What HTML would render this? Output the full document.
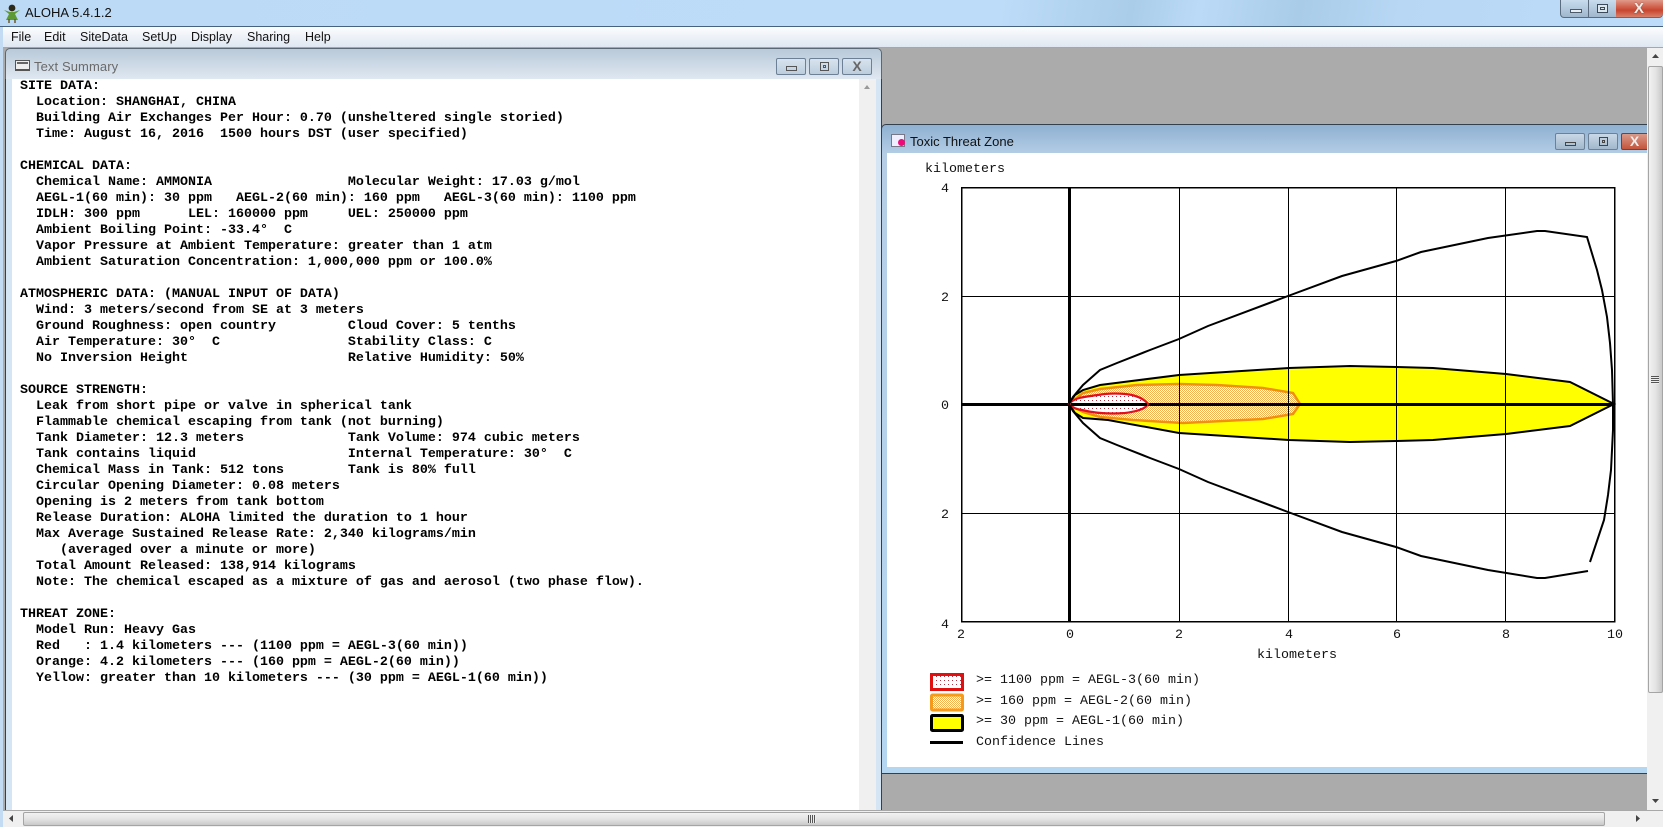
<!DOCTYPE html>
<html><head><meta charset="utf-8"><title>ALOHA 5.4.1.2</title>
<style>
html,body{margin:0;padding:0;width:1663px;height:827px;overflow:hidden;background:#ababab;font-family:"Liberation Sans",sans-serif}
.a{position:absolute}
#title{left:0;top:0;width:1663px;height:27px;background:linear-gradient(100deg,#bcdaf5 0%,#bddcf9 60%,#aacde9 68%,#bbdaf8 72%,#a9cce8 78%,#b7d7f5 84%,#bddcf9 100%);border-bottom:1px solid #46627e;box-sizing:border-box}
#menu{left:3px;top:27px;width:1660px;height:21px;background:linear-gradient(#fcfdfe,#f3f6fa 30%,#dfe7f2);border-bottom:1px solid #a0a8b2;box-sizing:border-box;font-size:12.5px;color:#111}
#menu span{position:absolute;top:3px}
.bar3{left:0;top:27px;width:3px;height:800px;background:#c3dcf3}
.child{background:linear-gradient(#b9c9d9,#dfe8f1 30px);border:1px solid #5a6774;border-radius:5px 5px 0 0;box-sizing:border-box}
.btn{position:absolute;box-sizing:border-box;border:1px solid #6c8196;border-radius:2px;background:linear-gradient(#c9d8e7,#a2b8cd);width:30px;height:17px}
.btn i{position:absolute;display:block;box-sizing:border-box;border:1px solid #333}
pre{margin:0;font:bold 13.33px/16px "Liberation Mono",monospace;color:#000}
</style></head><body>
<div id="title" class="a"></div>
<svg class="a" style="left:3px;top:4px" width="18" height="19" viewBox="0 0 18 19"><circle cx="9" cy="4" r="3.4" fill="#2d2a1a"/><path d="M1 6L7 8h4l6-2-5 4 3 6H3l3-6z" fill="#5d9a35"/><path d="M6 15v4M12 15v4" stroke="#6a5a30" stroke-width="1.5"/></svg>
<div class="a" style="left:25px;top:5px;font-size:13px;color:#111">ALOHA 5.4.1.2</div>
<div class="a" style="left:1560px;top:0;width:103px;height:18px;border:1px solid #5a6c7e;border-top:0;border-radius:0 0 4px 4px;box-sizing:border-box;background:linear-gradient(#c8dcee,#9fb6cc)"></div>
<div class="a" style="left:1616px;top:0;width:47px;height:17px;background:linear-gradient(#e09a8a,#c8452e 60%,#d8806a);border-radius:0 0 4px 0"></div>
<div class="a" style="left:1588px;top:0;width:1px;height:17px;background:#5a6c7e"></div>
<div class="a" style="left:1570px;top:9px;width:12px;height:4px;background:#e9eef3;border:1px solid #4a5a6a;box-sizing:border-box"></div>
<div class="a" style="left:1597px;top:4px;width:11px;height:9px;border:1px solid #3a4a5a;box-sizing:border-box;background:#dbe6ef"></div>
<div class="a" style="left:1600px;top:7px;width:5px;height:3px;border:1px solid #3a4a5a;box-sizing:border-box"></div>
<div class="a" style="left:1634px;top:0;font:bold 15px 'Liberation Sans',sans-serif;color:#f4ece6;text-shadow:0 0 1px #444">X</div>
<div class="bar3 a"></div>
<div class="a" style="left:3px;top:27px;width:1660px;height:1px;background:#3d5268"></div>
<div id="menu" class="a"><span style="left:8px">File</span><span style="left:41px">Edit</span><span style="left:77px">SiteData</span><span style="left:139px">SetUp</span><span style="left:188px">Display</span><span style="left:244px">Sharing</span><span style="left:302px">Help</span></div>

<!-- vertical scrollbar -->
<div class="a" style="left:1647px;top:48px;width:16px;height:762px;background:#f0f0f0"></div>
<div class="a" style="left:1648px;top:66px;width:15px;height:627px;box-sizing:border-box;border:1px solid #a5a5a5;border-radius:2px;background:linear-gradient(90deg,#f2f2f2,#e4e4e4 50%,#c9c9c9)"></div>
<svg class="a" style="left:1651px;top:53px" width="9" height="7"><path d="M1 5h7L4.5 1z" fill="#444"/></svg>
<svg class="a" style="left:1651px;top:798px" width="9" height="7"><path d="M1 1h7L4.5 5z" fill="#444"/></svg>
<div class="a" style="left:1651px;top:376px;width:8px;height:8px;background:repeating-linear-gradient(#555 0 1px,#eee 1px 2px)"></div>

<!-- text summary -->
<div class="child a" style="left:5px;top:48px;width:877px;height:762px"></div>
<div class="a" style="left:12px;top:79px;width:847px;height:731px;background:#fff"></div>
<div class="a" style="left:859px;top:79px;width:17px;height:731px;background:#f0f0f0"></div>
<svg class="a" style="left:863px;top:84px" width="9" height="7"><path d="M1 5h6L4 1z" fill="#999"/></svg>
<div class="a" style="left:5px;top:79px;width:7px;height:731px;background:#d5e5f3;border-left:1px solid #33404e;box-sizing:border-box"></div>
<div class="a" style="left:876px;top:79px;width:6px;height:731px;background:#d5e5f3;border-right:1px solid #33404e;box-sizing:border-box"></div>
<div class="a" style="left:15px;top:60px;width:15px;height:11px;box-sizing:border-box;border:1px solid #555;border-bottom-width:2px;background:#eee"></div>
<div class="a" style="left:17px;top:62px;width:11px;height:2px;background:#666"></div>
<div class="a" style="left:34px;top:59px;font-size:13px;color:#6a6a6a;letter-spacing:.1px">Text Summary</div>
<div class="btn" style="left:776px;top:58px;background:linear-gradient(#d8e4ef,#bccddc)"><i style="left:9px;top:7px;width:11px;height:5px;border-color:#555"></i></div>
<div class="btn" style="left:809px;top:58px;background:linear-gradient(#d8e4ef,#bccddc)"><i style="left:10px;top:3px;width:9px;height:9px;border-color:#555"></i><i style="left:13px;top:6px;width:3px;height:3px;border-color:#555"></i></div>
<div class="btn" style="left:842px;top:58px;background:linear-gradient(#d8e4ef,#bccddc);color:#666;font:bold 14px 'Liberation Sans',sans-serif;text-align:center;line-height:14px">X</div>
<pre class="a" style="left:20px;top:79px">SITE DATA:
  Location: SHANGHAI, CHINA
  Building Air Exchanges Per Hour: 0.70 (unsheltered single storied)
  Time: August 16, 2016  1500 hours DST (user specified)

CHEMICAL DATA:
  Chemical Name: AMMONIA                 Molecular Weight: 17.03 g/mol
  AEGL-1(60 min): 30 ppm   AEGL-2(60 min): 160 ppm   AEGL-3(60 min): 1100 ppm
  IDLH: 300 ppm      LEL: 160000 ppm     UEL: 250000 ppm
  Ambient Boiling Point: -33.4°  C
  Vapor Pressure at Ambient Temperature: greater than 1 atm
  Ambient Saturation Concentration: 1,000,000 ppm or 100.0%

ATMOSPHERIC DATA: (MANUAL INPUT OF DATA)
  Wind: 3 meters/second from SE at 3 meters
  Ground Roughness: open country         Cloud Cover: 5 tenths
  Air Temperature: 30°  C                Stability Class: C
  No Inversion Height                    Relative Humidity: 50%

SOURCE STRENGTH:
  Leak from short pipe or valve in spherical tank
  Flammable chemical escaping from tank (not burning)
  Tank Diameter: 12.3 meters             Tank Volume: 974 cubic meters
  Tank contains liquid                   Internal Temperature: 30°  C
  Chemical Mass in Tank: 512 tons        Tank is 80% full
  Circular Opening Diameter: 0.08 meters
  Opening is 2 meters from tank bottom
  Release Duration: ALOHA limited the duration to 1 hour
  Max Average Sustained Release Rate: 2,340 kilograms/min
     (averaged over a minute or more)
  Total Amount Released: 138,914 kilograms
  Note: The chemical escaped as a mixture of gas and aerosol (two phase flow).

THREAT ZONE:
  Model Run: Heavy Gas
  Red   : 1.4 kilometers --- (1100 ppm = AEGL-3(60 min))
  Orange: 4.2 kilometers --- (160 ppm = AEGL-2(60 min))
  Yellow: greater than 10 kilometers --- (30 ppm = AEGL-1(60 min))</pre>

<!-- threat zone window -->
<div class="a" style="left:881px;top:124px;width:766px;height:650px;box-sizing:border-box;background:linear-gradient(#8fb0d2,#b5cee6 30px,#b5d6f0);border:1px solid #33404e;border-right:0;border-radius:5px 0 0 0"></div>
<div class="a" style="left:887px;top:153px;width:760px;height:614px;background:#fff"></div>
<div class="a" style="left:891px;top:134px;width:14px;height:13px;box-sizing:border-box;border:1px solid #778;background:#eef"></div>
<div class="a" style="left:898px;top:139px;width:7px;height:7px;border-radius:50%;background:#ee0a78"></div>
<div class="a" style="left:910px;top:134px;font-size:13px;color:#111">Toxic Threat Zone</div>
<div class="btn" style="left:1555px;top:133px"><i style="left:9px;top:8px;width:11px;height:4px;border-color:#444"></i></div>
<div class="btn" style="left:1588px;top:133px"><i style="left:10px;top:3px;width:9px;height:9px;border-color:#444"></i><i style="left:13px;top:6px;width:3px;height:3px;border-color:#444"></i></div>
<div class="a" style="left:1621px;top:133px;width:26px;height:17px;box-sizing:border-box;border:1px solid #8a3a2a;border-right:0;border-radius:2px 0 0 2px;background:linear-gradient(#d99a8a,#c4553c);color:#eee;font:bold 14px/15px 'Liberation Sans',sans-serif;text-align:center">X</div>

<svg class="a" style="left:0;top:0" width="1663" height="827" font-family="'Liberation Mono',monospace" font-size="13.33" fill="#111">
<defs>
<pattern id="po" width="2" height="2" patternUnits="userSpaceOnUse"><rect width="2" height="2" fill="#fff"/><rect width="1" height="1" fill="#f2b050"/><rect x="1" y="1" width="1" height="1" fill="#f2b050"/></pattern>
<pattern id="pr" width="4" height="4" patternUnits="userSpaceOnUse"><rect width="4" height="4" fill="#fff"/><rect width="1" height="1" fill="#b83040"/></pattern>
</defs>
<!-- yellow -->
<path d="M1069 404L1075 395 1083 390 1100 385 1179 375 1289 368 1350 366 1396 367 1433 368 1506 374 1570 382 1614 404 1570 426 1506 434 1433 440 1396 441 1350 442 1289 440 1179 433 1108 420 1083 418 1075 413Z" fill="#ffff00" stroke="#000" stroke-width="2"/>
<!-- orange -->
<path d="M1069 404L1083 393 1100 389 1137 385 1179 384 1217 385 1263 388 1293 393 1300 404 1293 414 1263 419 1183 423 1133 420 1100 417 1083 412Z" fill="url(#po)" stroke="#f09010" stroke-width="2.5"/>
<!-- grid -->
<g stroke="#000" stroke-width="1" fill="none" shape-rendering="crispEdges">
<rect x="961.5" y="187.5" width="653" height="434" stroke-width="1.5"/>
<path d="M1179.5 187V622M1288.5 187V622M1396.5 187V622M1505.5 187V622M961 296.5H1615M961 513.5H1615"/>
</g>
<path d="M1069.5 187V622M961 404.5H1615" stroke="#000" stroke-width="3" shape-rendering="crispEdges"/>
<!-- red -->
<path d="M1069 404C1074 398 1082 397 1098 395 1108 393 1122 393 1132 395 1140 397 1145 400 1148 404 1146 408 1140 411 1125 413 1112 414 1098 414 1082 410 1074 409 1071 406 1069 404Z" fill="url(#pr)" stroke="#e01020" stroke-width="2.2"/>
<path d="M1071 404.5H1147" stroke="#000" stroke-width="3" shape-rendering="crispEdges"/>
<!-- confidence -->
<g fill="none" stroke="#000" stroke-width="2">
<path d="M1069 404L1073 397 1083 385 1100 370 1117 363 1150 350 1179 339 1208 326 1288 296 1342 276 1396 261 1421 252 1488 238 1537 231 1545 231 1587 237 1597 270 1602 290 1607 317 1610 343 1612 370 1613 404 1613 430 1611 470 1608 495 1604 520 1590 562"/>
<path d="M1069 404L1073 411 1083 423 1100 438 1117 445 1150 458 1179 469 1208 482 1288 512 1342 532 1396 547 1421 556 1488 570 1537 578 1545 578 1588 571"/>
</g>
<text x="925" y="172">kilometers</text>
<text x="941" y="192">4</text><text x="941" y="301">2</text><text x="941" y="409">0</text><text x="941" y="518">2</text><text x="941" y="628">4</text>
<text x="957" y="638">2</text><text x="1066" y="638">0</text><text x="1175" y="638">2</text><text x="1285" y="638">4</text><text x="1393" y="638">6</text><text x="1502" y="638">8</text><text x="1607" y="638">10</text>
<text x="1257" y="658">kilometers</text>
<rect x="931.5" y="674.5" width="31" height="15" fill="url(#pr)" stroke="#e01010" stroke-width="3"/>
<rect x="931.5" y="695" width="31" height="15" rx="1" fill="url(#po)" stroke="#f59a1a" stroke-width="3"/>
<rect x="931.5" y="715.5" width="31" height="15" rx="1" fill="#ffff00" stroke="#000" stroke-width="3"/>
<rect x="930" y="741" width="33" height="3" fill="#000"/>
<text x="976" y="683">&gt;= 1100 ppm = AEGL-3(60 min)</text>
<text x="976" y="704">&gt;= 160 ppm = AEGL-2(60 min)</text>
<text x="976" y="724">&gt;= 30 ppm = AEGL-1(60 min)</text>
<text x="976" y="745">Confidence Lines</text>
</svg>

<!-- horizontal scrollbar -->
<div class="a" style="left:3px;top:810px;width:1660px;height:17px;background:#f0f0f0;border-top:1px solid #a8a8a8;box-sizing:border-box"></div>
<div class="a" style="left:23px;top:812px;width:1582px;height:14px;box-sizing:border-box;border:1px solid #a5a5a5;border-radius:2px;background:linear-gradient(#f2f2f2,#e4e4e4 50%,#c9c9c9)"></div>
<div class="a" style="left:808px;top:815px;width:8px;height:8px;background:repeating-linear-gradient(90deg,#555 0 1px,#eee 1px 2px)"></div>
<svg class="a" style="left:8px;top:814px" width="7" height="10"><path d="M5 1v7L1 4.5z" fill="#444"/></svg>
<svg class="a" style="left:1635px;top:814px" width="7" height="10"><path d="M1 1v7l4-3.5z" fill="#444"/></svg>
</body></html>
